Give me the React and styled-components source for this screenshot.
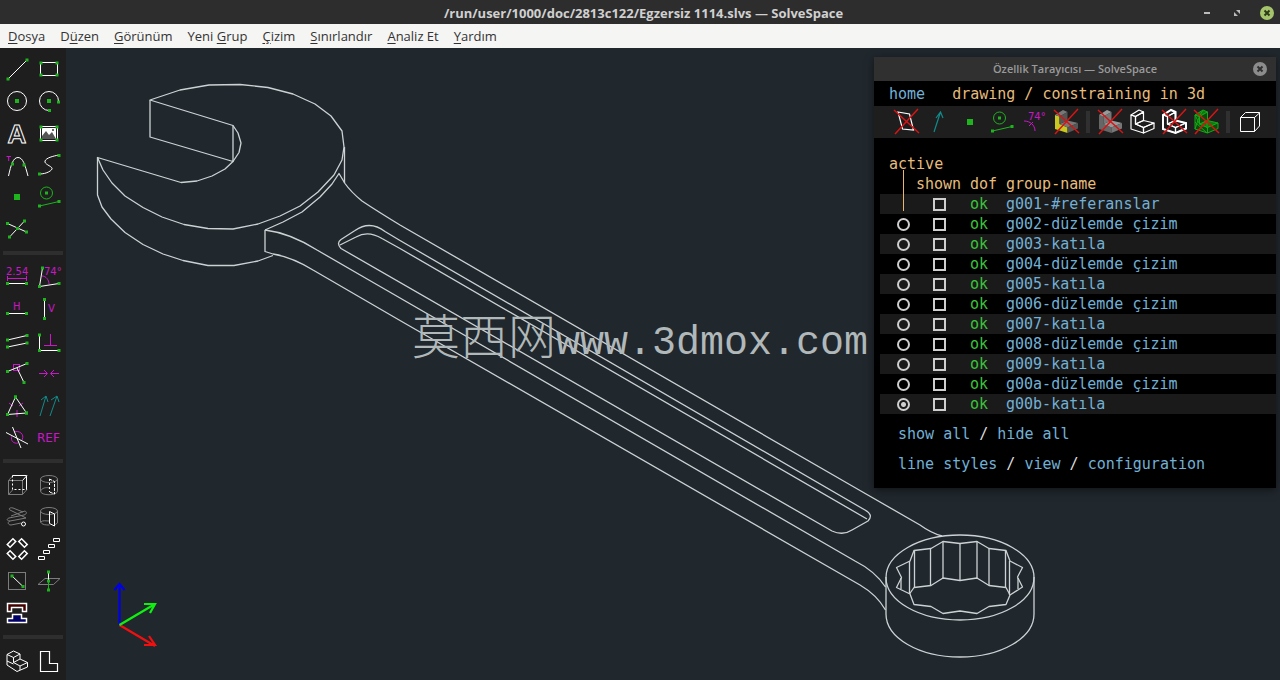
import React, { useState } from 'react';
import styled, { createGlobalStyle } from 'styled-components';

const GlobalStyle = createGlobalStyle`
  * {
    box-sizing: border-box;
  }
  body {
    margin: 0;
    background: #20272d;
    font-family: "Open Sans", "Noto Sans", sans-serif;
  }
  button, input {
    margin: 0;
    padding: 0;
    border: 0;
    background: none;
    color: inherit;
    font: inherit;
  }
`;

const Window = styled.div`
  display: flex;
  flex-direction: column;
  min-height: 100vh;
`;

const TitleBar = styled.header`
  display: grid;
  grid-template-columns: 1fr auto 1fr;
  align-items: center;
  height: 24px;
  padding: 0 5px 0 12px;
  background: #2d2d2d;
  color: #d0d0d0;
`;

const WindowTitle = styled.h1`
  grid-column: 2;
  margin: 0;
  font-size: 13px;
  font-weight: 700;
  line-height: 26px;
  white-space: nowrap;
`;

const WindowButtons = styled.div`
  display: flex;
  justify-content: flex-end;
  gap: 14px;
`;

const WindowButton = styled.button`
  width: 16px;
  height: 16px;
`;

const Glyph = styled.svg`
  display: block;
  fill: none;
  stroke: #fff;
`;

const MenuBar = styled.nav`
  display: flex;
  align-items: center;
  gap: 15px;
  height: 24px;
  padding: 0 8px;
  background: #f5f5f4;
  color: #333;
`;

const MenuItem = styled.button`
  font-size: 13px;
  line-height: 24px;
  white-space: nowrap;

  u {
    text-underline-offset: 2px;
  }
`;

const Workspace = styled.main`
  display: flex;
  flex: 1;
`;

const ToolBar = styled.aside`
  flex: none;
  padding: 5px 1px 3px;
  background: #1e1e1e;
`;

const ToolGroup = styled.div`
  display: grid;
  grid-template-columns: 32px 32px;
`;

const ToolDivider = styled.div`
  height: 4px;
  margin: 6px 2px;
  background: #2e2e2e;
`;

const ToolButton = styled.button`
  width: 32px;
  height: 32px;
`;

const Canvas = styled.section`
  position: relative;
  display: flex;
  flex: 1;
  min-width: 0;
  background: #20272d;
`;

const Drawing = styled.svg`
  flex: 1;
  min-width: 0;
  fill: none;
  stroke: #ccd2d4;
`;

const Watermark = styled.text`
  fill: #b0b8b9;
  stroke: none;
  font-family: "Liberation Mono", monospace;
  font-size: 40px;
`;

const WatermarkHan = styled.tspan`
  font-family: "Noto Sans CJK SC", sans-serif;
  font-size: 48px;
  font-weight: 300;
`;

const Browser = styled.section`
  position: absolute;
  top: 9px;
  right: 4px;
  width: 402px;
  padding-bottom: 14px;
  background: #000;
  box-shadow: 0 2px 8px rgba(0, 0, 0, 0.5);
  color: #e6bc7c;
  font-family: "DejaVu Sans Mono", "Liberation Mono", monospace;
  font-size: 15px;
  line-height: 20px;
`;

const BrowserTitle = styled.div`
  display: grid;
  grid-template-columns: 1fr auto 1fr;
  align-items: center;
  height: 24px;
  padding: 0 8px;
  background: #303030;
  color: #9a9a9a;

  h2 {
    grid-column: 2;
    margin: 0;
    font: 600 11px/24px "Open Sans", "Noto Sans", sans-serif;
  }

  button {
    justify-self: end;
  }
`;

const Crumbs = styled.div`
  display: flex;
  gap: 27px;
  height: 25px;
  padding: 3px 15px;
`;

const Link = styled.a`
  color: #72b0d6;
  text-decoration: none;
`;

const ViewBar = styled.div`
  display: flex;
  align-items: center;
  height: 32px;
  padding: 0 8px 0 16px;
  background: #1e1e1e;
`;

const ViewSeparator = styled.span`
  flex: none;
  width: 4px;
  height: 22px;
  margin: 0 4px;
  background: #303030;
`;

const GroupTable = styled.table`
  width: 100%;
  margin-top: 16px;
  border-collapse: collapse;
  table-layout: fixed;

  th, td {
    height: 20px;
    padding: 0;
    font-weight: 400;
    text-align: left;
    white-space: nowrap;
  }
`;

const GroupRow = styled.tr`
  background: ${(props) => (props.$striped ? 'linear-gradient(90deg, #000 6px, #1a1a1a 6px)' : '#000')};
`;

const ActiveHead = styled.th`
  position: relative;

  && {
    padding-left: 15px;
  }

  &::after {
    content: "";
    position: absolute;
    z-index: 1;
    top: 16px;
    left: 29px;
    height: 41px;
    border-left: 1px solid #e6b86e;
  }
`;

const RadioCell = styled.td`
  && {
    padding-left: 23px;
  }
`;

const CheckCell = styled.td`
  && {
    padding-left: 17px;
  }
`;

const Toggle = styled.input`
  display: block;
  appearance: none;
  width: 13px;
  height: 13px;
  border: 2px solid #cfcfcf;
  border-radius: ${(props) => (props.type === 'radio' ? '50%' : '0')};

  &[type="radio"]:checked {
    background: radial-gradient(circle, #cfcfcf 2px, transparent 3px);
  }

  &[type="checkbox"]:checked {
    background: #cfcfcf;
    box-shadow: inset 0 0 0 2px #000;
  }
`;

const Dof = styled.td`
  color: #3cc43c;
`;

const BrowserLinks = styled.p`
  margin: 10px 24px 0;
  color: #ddd;
`;

const WHITE = '#fff';
const GREEN = '#1db41d';
const GREY = '#7c7c7c';
const PURPLE = '#c818c8';
const TEAL = '#128a8a';

const Dot = ({ x, y, size = 4 }) => (
  <rect x={x - size / 2} y={y - size / 2} width={size} height={size} fill={GREEN} stroke="none" />
);

const Label = ({ x, y, size = 10, children }) => (
  <text x={x} y={y} fill={PURPLE} stroke="none" fontSize={size} fontFamily="DejaVu Sans, sans-serif">
    {children}
  </text>
);

// end points of a sketch line, marked green
const Segment = ({ x1, y1, x2, y2, color = WHITE }) => (
  <>
    <line x1={x1} y1={y1} x2={x2} y2={y2} stroke={color} />
    <Dot x={x1} y={y1} size={3} />
    <Dot x={x2} y={y2} size={3} />
  </>
);

const Cross = () => <path d="M4 4L29 27M28 3L5 28" stroke="#d81414" strokeWidth="1.5" />;

const Bench = ({ front = 'none', top = 'none', side = 'none', ...rest }) => (
  <g strokeLinejoin="round" {...rest}>
    <path d="M5 9L9.500 10.500V18L17.500 21.500V27L5 23Z" fill={front} />
    <path d="M5 9L13 4L17.500 6L9.500 10.500ZM9.500 18L17.500 14.500L28 17L17.500 21.500Z" fill={top} />
    <path d="M9.500 10.500L17.500 6V14.500L9.500 18ZM28 17V22.500L17.500 27V21.500Z" fill={side} />
  </g>
);

const ICONS = {
  line: <Segment x1={7} y1={26} x2={26} y2={7} />,
  rectangle: (
    <>
      <rect x="7.500" y="9.500" width="17" height="13" />
      <Dot x={8} y={10} size={3} /><Dot x={24} y={10} size={3} /><Dot x={8} y={22} size={3} /><Dot x={24} y={22} size={3} />
    </>
  ),
  circle: (
    <>
      <circle cx="16" cy="16" r="9.500" />
      <Dot x={16} y={16} />
    </>
  ),
  arc: (
    <>
      <path d="M25.500 16A9.500 9.500 0 1 0 16 25.500" />
      <Dot x={16} y={16} /><Dot x={25.5} y={17} size={3} /><Dot x={16.5} y={25.5} size={3} />
    </>
  ),
  text: (
    <text x="16" y="26" textAnchor="middle" fontSize="26" fontWeight="700" strokeWidth="1" fontFamily="Liberation Sans, sans-serif">A</text>
  ),
  image: (
    <>
      <rect x="7.500" y="9.500" width="17" height="14" fill="#1e1e1e" />
      <rect x="9" y="11" width="14" height="11" fill="#fff" stroke="none" />
      <path d="M9 22V19L13 14L16 18L19 15L23 22Z" fill="#555" stroke="none" />
      <circle cx="20" cy="13" r="1" fill="#333" stroke="none" />
      <Dot x={8} y={10} size={3} /><Dot x={24} y={10} size={3} /><Dot x={8} y={23} size={3} /><Dot x={24} y={23} size={3} />
    </>
  ),
  tangentArc: (
    <>
      <path d="M7.500 27C10 16 12 8.500 17 8.500S24 16 27 27" />
      <path d="M5.500 7.500H10M7.700 7.500V12" stroke={PURPLE} />
      <Dot x={11.5} y={15} size={3} /><Dot x={23} y={16} size={3} />
    </>
  ),
  bezier: (
    <>
      <path d="M6.500 25C14 25 20 21 19 19S11 15 12 12S20 7 26 6" />
      <Dot x={6.5} y={25} size={3} /><Dot x={26} y={6.5} size={3} />
    </>
  ),
  point: <Dot x={16} y={16} size={6} />,
  construction: (
    <>
      <circle cx="13.500" cy="12" r="6" stroke={GREEN} />
      <Dot x={13.5} y={12} size={3} />
      <Segment x1={6.5} y1={25} x2={26} y2={20.5} color={GREEN} />
    </>
  ),
  split: (
    <>
      <Segment x1={6.5} y1={10.5} x2={25.5} y2={19} />
      <Segment x1={8.5} y1={24} x2={23.5} y2={8} />
      <Dot x={16.5} y={15.5} size={3} />
    </>
  ),
  distance: (
    <>
      <Label x={5} y={14}>2.54</Label>
      <path d="M6.500 15V20M25.500 15V20M6.500 17.500H25.500" stroke={PURPLE} />
      <Segment x1={6.5} y1={22.5} x2={25.5} y2={22.5} />
    </>
  ),
  angle: (
    <>
      <Segment x1={9.5} y1={7} x2={6.5} y2={25.5} />
      <Segment x1={6.5} y1={25.5} x2={26} y2={22.5} />
      <path d="M9 15C13 15 16 19 16 23" stroke={PURPLE} />
      <Label x={11} y={14}>74°</Label>
    </>
  ),
  horizontal: (
    <>
      <Label x={12} y={17}>H</Label>
      <Segment x1={6.5} y1={20.5} x2={25.5} y2={20.5} />
    </>
  ),
  vertical: (
    <>
      <Segment x1={11.5} y1={6.5} x2={11.5} y2={25.5} />
      <Label x={15} y={19}>V</Label>
    </>
  ),
  parallel: (
    <>
      <Segment x1={6.5} y1={15} x2={26} y2={10.5} />
      <Segment x1={6.5} y1={22} x2={26} y2={18} />
    </>
  ),
  perpendicular: (
    <>
      <path d="M17.500 9V20.500M11 20.500H24" stroke={PURPLE} />
      <Segment x1={6.5} y1={10} x2={6.5} y2={25.5} />
      <Segment x1={6.5} y1={25.5} x2={26} y2={25.5} />
    </>
  ),
  pointOnLine: (
    <>
      <rect x="12.500" y="7.500" width="6" height="6" stroke={PURPLE} />
      <Segment x1={6.5} y1={14.5} x2={26} y2={6.5} />
      <path d="M16 11L23 25.500" />
      <Dot x={23} y={25.5} size={3} />
    </>
  ),
  symmetric: (
    <path d="M6 16.500H14M11 13L14.500 16.500L11 20M26 16.500H18M21 13L17.500 16.500L21 20" stroke={PURPLE} />
  ),
  equal: (
    <>
      <path d="M8 14L12 17M18 17L22 14M16 21V28" stroke={PURPLE} />
      <Segment x1={14.5} y1={8} x2={6.5} y2={25.5} />
      <Segment x1={14.5} y1={8} x2={25.5} y2={24} />
      <Segment x1={6.5} y1={25.5} x2={25.5} y2={24} />
    </>
  ),
  sameOrientation: (
    <path d="M7 27L13 7M8 11L13 7L15 13M17 27L24 7M18 11L24 7L26 13" stroke={TEAL} />
  ),
  otherAngle: (
    <>
      <path d="M13 11C18 9 24 13 21 19M11 15C9 20 13 23 17 22" stroke={PURPLE} />
      <path d="M5 11.500L27 23M11.500 6L20 27" />
    </>
  ),
  reference: <Label x={4} y={21} size={12}>REF</Label>,
  extrude: (
    <>
      <path d="M7.500 11.500H21.500V25.500H7.500ZM7.500 11.500L12 6.500M7.500 25.500L12 20.500M21.500 25.500L26 20.500" stroke={GREY} />
      <path d="M21.500 11.500L26 6.500M11.500 6.500H25.500V20.500" />
      <path d="M11.500 6.500V20.500H26" strokeDasharray="2 2" />
    </>
  ),
  lathe: (
    <>
      <ellipse cx="16" cy="10" rx="8.500" ry="3.500" stroke={GREY} />
      <path d="M7.500 10V22C7.500 27 24.500 27 24.500 22V10M7.500 22C9 19 13 18 16 19" stroke={GREY} />
      <path d="M16.500 10V23" strokeDasharray="2 2" />
      <path d="M16.500 10L21.500 12.500V25L16.500 23" strokeDasharray="3 1" />
    </>
  ),
  helix: (
    <>
      <path d="M12 7L22 11M9 9L25 17M12 7C9 6 7 8 9 9M10 15L24 10C26 11 26 13 23 14L8 17C5 18 6 20 9 20L25 17M9 20C6 21 7 24 10 24L20 22" stroke={GREY} />
      <circle cx="22.500" cy="23" r="2" />
    </>
  ),
  revolve: (
    <>
      <ellipse cx="16" cy="10" rx="8.500" ry="3.500" stroke={GREY} />
      <path d="M7.500 10V21C9 24 13 24 16.500 24M24.500 10V22L21.500 24M7.500 21C10 19 13 20 16.500 20" stroke={GREY} />
      <path d="M16.500 10.500L21.500 13V25L16.500 22.500Z" />
    </>
  ),
  rotate: (
    <g strokeWidth="1.500">
      <rect x="6.500" y="8" width="8" height="4" transform="rotate(-45 10.500 10)" />
      <rect x="18" y="8" width="8" height="4" transform="rotate(45 22 10)" />
      <rect x="6.500" y="20" width="8" height="4" transform="rotate(45 10.500 22)" />
      <rect x="18" y="20" width="8" height="4" transform="rotate(-45 22 22)" />
    </g>
  ),
  translate: (
    <path d="M5.500 23.500H11.500V26.500H5.500ZM10.500 17.500H16.500V20.500H10.500ZM15.500 11.500H21.500V14.500H15.500ZM20.500 5.500H26.500V8.500H20.500Z" />
  ),
  sketchPlane: (
    <>
      <rect x="7.500" y="7.500" width="17" height="17" stroke={GREY} />
      <Segment x1={11} y1={11} x2={22} y2={21.5} />
    </>
  ),
  workplane: (
    <>
      <path d="M5 19.500L12 13.500H27L20.500 19.500Z" stroke={GREY} />
      <path d="M15.500 7V16" />
      <path d="M15.500 16V26" stroke={GREEN} />
      <Dot x={15.5} y={7} size={3} /><Dot x={15.5} y={16} size={3} /><Dot x={15.5} y={25} size={3} />
    </>
  ),
  assemble: (
    <g strokeWidth="1.500">
      <path d="M6.500 6.500H25.500V14.500H21.500V10.500H10.500V14.500H6.500Z" fill="#400" />
      <path d="M6.500 25.500H25.500V21.500H20.500V17.500H11.500V21.500H6.500Z" fill="#006" />
    </g>
  ),
  solid: (
    <path
      d="M6 9.500L12.500 6L19 9L12.500 12.500ZM6 9.500V20L16 26.500L26.500 22V17.500L19 14L12.500 17.500V12.500M19 9V14M12.500 17.500L19 21M26.500 17.500L19 21V25M6 16L12.500 19"
      strokeLinejoin="round"
    />
  ),
  outline: <path d="M7.500 6.500H16.500V18.500H24.500V26.500H7.500Z" strokeWidth="1.200" />,

  hiddenPlane: (
    <>
      <path d="M8 6L19.500 8L23.500 24L12.500 23Z" strokeWidth="1.200" />
      <Cross />
    </>
  ),
  normals: <path d="M12 26L18.500 6M14 12L18.500 6L21 12" stroke={TEAL} strokeWidth="1.200" />,
  constraints: (
    <>
      <path d="M6 15C12 15 17 19 17 25M11 20L15 16" stroke={PURPLE} />
      <Label x={10} y={14}>74°</Label>
    </>
  ),
  hiddenFaces: (
    <>
      <Bench front="#c8c81e" top="#777" side="#555" stroke="none" />
      <Cross />
    </>
  ),
  hiddenShade: (
    <>
      <Bench front="#666" top="#999" side="#777" stroke="none" />
      <Cross />
    </>
  ),
  edges: <Bench strokeWidth="1.200" />,
  hiddenOutlines: (
    <>
      <Bench strokeWidth="1.200" />
      <path d="M5 9L13 4L17.500 6V14.500L28 17V22.500L17.500 27L5 23Z" strokeWidth="2" />
      <Cross />
    </>
  ),
  hiddenMesh: (
    <>
      <Bench front="#0c4c0c" top="#0f7a0f" side="#0c4c0c" stroke="#16a816" />
      <path d="M5 9L9.500 18M5 23L9.500 10M5 16L17 27M13 4L9.500 10M17 15L17 22" stroke="#16a816" />
      <Cross />
    </>
  ),
  box: <path d="M6.500 11.500H20.500V25.500H6.500ZM6.500 11.500L11.500 6.500H25.500V20L20.500 25.500M20.500 11.500L26 6.500" />,
};

const TOOLS = [
  ['line', 'rectangle', 'circle', 'arc', 'text', 'image', 'tangentArc', 'bezier', 'point', 'construction', 'split'],
  ['distance', 'angle', 'horizontal', 'vertical', 'parallel', 'perpendicular', 'pointOnLine', 'symmetric', 'equal', 'sameOrientation', 'otherAngle', 'reference'],
  ['extrude', 'lathe', 'helix', 'revolve', 'rotate', 'translate', 'sketchPlane', 'workplane', 'assemble'],
  ['solid', 'outline'],
];

const VIEW_TOOLS = [
  ['hiddenPlane', 'normals', 'point', 'construction', 'constraints', 'hiddenFaces'],
  ['hiddenShade', 'edges', 'hiddenOutlines', 'hiddenMesh'],
  ['box'],
];

// text before the mnemonic, the mnemonic, text after it
const MENUS = [
  ['', 'D', 'osya'],
  ['D', 'ü', 'zen'],
  ['', 'G', 'örünüm'],
  ['Yeni ', 'G', 'rup'],
  ['', 'Ç', 'izim'],
  ['', 'S', 'ınırlandır'],
  ['', 'A', 'naliz Et'],
  ['', 'Y', 'ardım'],
];

const GROUPS = [
  'g001-#referanslar',
  'g002-düzlemde çizim',
  'g003-katıla',
  'g004-düzlemde çizim',
  'g005-katıla',
  'g006-düzlemde çizim',
  'g007-katıla',
  'g008-düzlemde çizim',
  'g009-katıla',
  'g00a-düzlemde çizim',
  'g00b-katıla',
];

function Tool({ name }) {
  return (
    <ToolButton type="button" aria-label={name}>
      <Glyph width="32" height="32" viewBox="0 0 32 32">{ICONS[name]}</Glyph>
    </ToolButton>
  );
}

function Wrench() {
  return (
    <g strokeWidth="1.300" strokeLinejoin="round">
      {/* open jaw */}
      <path d="M150 100L180 90L209 85L240 84.500L268 87.500L293 94L315 104L331 116L342 131L344 147L342 160L334 175L318 192L300 206L280 216L258 224L233 229L208 228.500L184 224.500L162 217L143 207.500L125 196L112 183L103 170L97.500 157.500L181 182.500L197 181L212 176L225 169L233 161.500L239 152.500L241 143L238 133L233 125.500Z" />
      <path d="M150 100V137L233 161.500V125.500M97.500 157.500V195L102 207L111 219L125 232.500L143 244.500L163 254L183 260.500L208 265.500H234L258 261L273 255.500" />
      <path d="M344.500 147V183" />

      {/* handle */}
      <path d="M265 230L283 222L302 212L320 197L332 184L339 173.500L345 183.500Q351 192 362 201Q377 211 400 225L860 490.500L920 525Q931 533 942 536" />
      <path d="M265 230V251.500L273 254Q292 257 313 270L400 320.500L860 585Q877 595 885.500 610" />
      <path d="M265 230Q290 233 317 250L368 279.500L855 561Q875 571 885.500 587" />

      {/* pocket */}
      <path d="M341 248.500Q336 243 341 239.500L355 230.500Q370 220 385 231.500L400 240.500L865 510Q874 515 868 521L852 530Q843 536 832 531Z" />
      <path d="M340 245L356 237Q368 230 382 238.500L400 248.500L867 519" />

      {/* ring */}
      <ellipse cx="960" cy="577.500" rx="74" ry="42.500" />
      <path d="M886 577V614C886 638 919 657 960 657S1034 638 1034 614V577" />
      <path d="M896.500 567.500L910 561L914 550.500L931 548.500L943 541.500L960 543.500L977 541.500L989 548.500L1006 550.500L1010 561L1022.500 567.500L1017.500 577L1022.500 587L1010 595L1006 604.500L989 606.500L977 613.500L960 611L943 613.500L931 606.500L914 604.500L910 594L896.500 587.500L901.500 577.500Z" />
      <path d="M909.500 594L914 587.500L931 585.500L943 578L960 580.500L977 578L989 585.500L1006 587.500L1010 595" />
      <path d="M909.500 561V594M914.500 550V587M930.500 548V585M943 541V578M960 543V580M977 541V578M989 548V585M1005.500 550V587M1009.500 561V595M901 578V589M1018 578V589" />
    </g>
  );
}

function Axes() {
  return (
    <g strokeWidth="2.200">
      <path d="M119.500 625V585M114.500 590L119.500 584L124.500 590" stroke="#0000e6" />
      <path d="M119.500 625L155 646M149 636L155 645L144 645" stroke="#f01010" />
      <path d="M119.500 625L155 604M144 604L155 604L150 613" stroke="#10f010" />
    </g>
  );
}

function PropertyBrowser() {
  const [active, setActive] = useState('g00b-katıla');

  return (
    <Browser>
      <BrowserTitle>
        <h2>Özellik Tarayıcısı — SolveSpace</h2>
        <WindowButton type="button" aria-label="close browser">
          <Glyph width="16" height="16" viewBox="0 0 16 16">
            <circle cx="8" cy="8" r="7" fill="#8c8c8c" stroke="none" />
            <path d="M5.500 5.500L10.500 10.500M10.500 5.500L5.500 10.500" stroke="#303030" strokeWidth="2" />
          </Glyph>
        </WindowButton>
      </BrowserTitle>
      <Crumbs>
        <Link href="#home">home</Link>
        <span>drawing / constraining in 3d</span>
      </Crumbs>
      <ViewBar>
        {VIEW_TOOLS.map((names, i) => (
          <React.Fragment key={names[0]}>
            {i > 0 && <ViewSeparator />}
            {names.map((name) => <Tool key={name} name={name} />)}
          </React.Fragment>
        ))}
      </ViewBar>
      <GroupTable>
        <colgroup>
          <col width="42" />
          <col width="54" />
          <col width="36" />
          <col />
        </colgroup>
        <thead>
          <tr>
            <ActiveHead colSpan="4">active</ActiveHead>
          </tr>
          <tr>
            <th />
            <th>shown</th>
            <th>dof</th>
            <th>group-name</th>
          </tr>
        </thead>
        <tbody>
          {GROUPS.map((group, i) => (
            <GroupRow key={group} $striped={i % 2 === 0}>
              <RadioCell>
                {i > 0 && (
                  <Toggle
                    type="radio"
                    name="active"
                    aria-label={group}
                    checked={active === group}
                    onChange={() => setActive(group)}
                  />
                )}
              </RadioCell>
              <CheckCell><Toggle type="checkbox" aria-label={group} /></CheckCell>
              <Dof>ok</Dof>
              <td><Link href={'#' + group.slice(0, 4)}>{group}</Link></td>
            </GroupRow>
          ))}
        </tbody>
      </GroupTable>
      <BrowserLinks>
        <Link href="#show">show all</Link> / <Link href="#hide">hide all</Link>
      </BrowserLinks>
      <BrowserLinks>
        <Link href="#styles">line styles</Link> / <Link href="#view">view</Link> / <Link href="#configuration">configuration</Link>
      </BrowserLinks>
    </Browser>
  );
}

function App() {
  return (
    <Window>
      <GlobalStyle />
      <TitleBar>
        <WindowTitle>/run/user/1000/doc/2813c122/Egzersiz 1114.slvs — SolveSpace</WindowTitle>
        <WindowButtons>
          <WindowButton type="button" aria-label="minimize">
            <Glyph width="16" height="16" viewBox="0 0 16 16">
              <path d="M5 8H11" stroke="#bbb" strokeWidth="2" />
            </Glyph>
          </WindowButton>
          <WindowButton type="button" aria-label="restore">
            <Glyph width="16" height="16" viewBox="0 0 16 16">
              <path d="M7 5H11V9ZM5 7V11H9Z" fill="#bbb" stroke="none" />
            </Glyph>
          </WindowButton>
          <WindowButton type="button" aria-label="close">
            <Glyph width="16" height="16" viewBox="0 0 16 16">
              <circle cx="8" cy="8" r="7" fill="#a5c46c" stroke="none" />
              <path d="M5.500 5.500L10.500 10.500M10.500 5.500L5.500 10.500" stroke="#2d3a1a" strokeWidth="2" />
            </Glyph>
          </WindowButton>
        </WindowButtons>
      </TitleBar>
      <MenuBar>
        {MENUS.map(([before, key, after]) => (
          <MenuItem type="button" key={key + after}>{before}<u>{key}</u>{after}</MenuItem>
        ))}
      </MenuBar>
      <Workspace>
        <ToolBar>
          {TOOLS.map((names, i) => (
            <React.Fragment key={names[0]}>
              {i > 0 && <ToolDivider />}
              <ToolGroup>
                {names.map((name) => <Tool key={name} name={name} />)}
              </ToolGroup>
            </React.Fragment>
          ))}
        </ToolBar>
        <Canvas>
          <Drawing viewBox="66 48 1214 632">
            <Wrench />
            <Axes />
            <Watermark x="412" y="354">
              <WatermarkHan>莫西网</WatermarkHan>www.3dmox.com
            </Watermark>
          </Drawing>
          <PropertyBrowser />
        </Canvas>
      </Workspace>
    </Window>
  );
}

export default App;
